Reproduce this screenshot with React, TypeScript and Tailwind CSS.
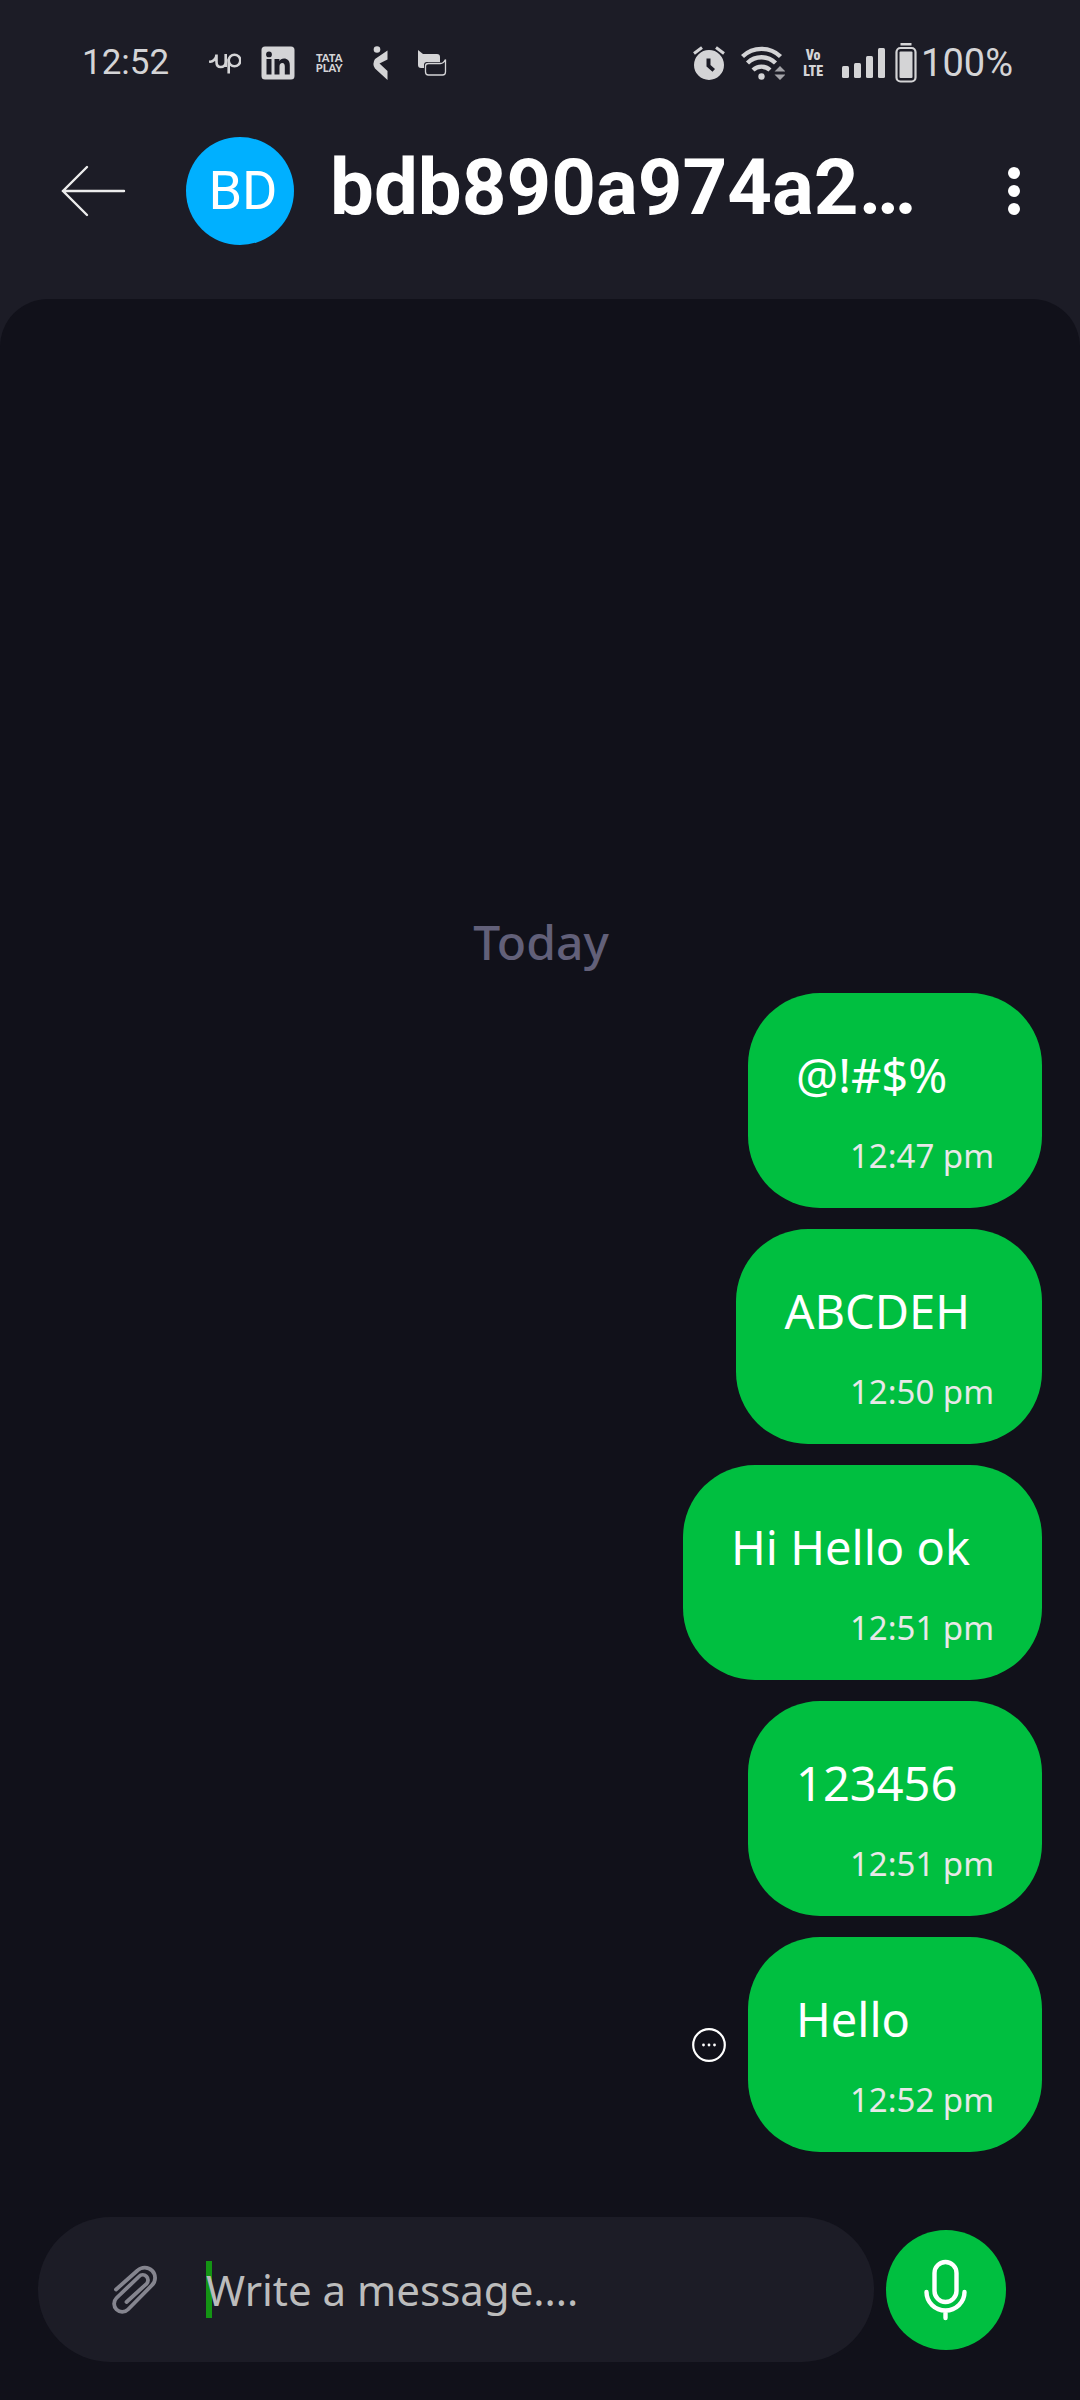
const messages = [
  { text: "@!#$%", time: "12:47 pm" },
  { text: "ABCDEH", time: "12:50 pm" },
  { text: "Hi Hello ok", time: "12:51 pm" },
  { text: "123456", time: "12:51 pm" },
  { text: "Hello", time: "12:52 pm", pending: true },
];

function NotificationIcons() {
  return (
    <div className="flex items-center gap-5 text-[#d4d4d6]">
      <svg className="h-8 w-8" viewBox="0 0 32 32" fill="none" stroke="currentColor" strokeWidth="2.6" aria-hidden="true">
        <path d="M0 14.5c3.500 1 7.500-2.500 7.500-7v7.500c0 3 1.600 5 4.200 5s5-1.700 5-5V7v13" />
        <circle cx="25.500" cy="13.500" r="5.800" />
        <path d="M19.700 12v14.500" />
      </svg>
      <svg className="h-[34px] w-[34px]" viewBox="0 0 34 34" aria-hidden="true">
        <path
          fill="currentColor"
          fillRule="evenodd"
          d="M4 .5h26Q33.500 .5 33.500 4v26q0 3.500-3.500 3.500H4Q.5 33.500 .5 30V4Q.5 .5 4 .5ZM5.500 13v15.500h5V13ZM8 5.500a2.900 2.900 0 1 0 0 5.800a2.900 2.900 0 0 0 0-5.800ZM13.500 13v15.500h5v-8c0-2 1-3.500 2.800-3.500s2.500 1.300 2.500 3.500v8h5v-9.200c0-4.500-2.400-6.700-5.800-6.700c-2.300 0-3.800 1.200-4.600 2.600V13Z"
        />
      </svg>
      <span className="w-7 text-center font-['Lato'] text-[11px] leading-[10px] font-black">
        <span className="block">TATA</span>
        <span className="block">PLAY</span>
      </span>
    </div>
  );
}

function OtherNotificationIcons() {
  return (
    <div className="flex items-center gap-[29px] text-[#d4d4d6]">
      <svg className="h-[34px] w-[15px]" viewBox="0 0 15 34" fill="currentColor" aria-hidden="true">
        <circle cx="4" cy="3.500" r="3.300" />
        <path d="M14.500 4.500v9L6.500 17.500l8 7.500v9L2 22.500Q-1.200 18 2 13Z" />
      </svg>
      <svg className="h-[26px] w-[30px]" viewBox="0 0 30 26" aria-hidden="true">
        <path fill="currentColor" d="M1 0l5 4h14q3 0 3 3v5H10q-3 0-3 3v3H4q-3 0-3-3Z" />
        <path fill="none" stroke="currentColor" strokeWidth="1.300" d="M28.500 9.500V22q0 3-3 3h-14q-3 0-3-3v-6q0-2.500 3-2.500h12q3 0 5-4Z" />
      </svg>
    </div>
  );
}

function SystemIcons() {
  return (
    <div className="flex items-center text-[#d4d4d6]">
      <svg className="h-[34px] w-8" viewBox="0 0 32 34" aria-hidden="true">
        <path
          fill="currentColor"
          fillRule="evenodd"
          d="M16 4a15 15 0 1 0 0 30a15 15 0 0 0 0-30ZM13.500 12.500h4v6.500l4.500 4l-2.500 2.800l-6-5.300Z"
        />
        <path stroke="currentColor" strokeWidth="3" d="M1 7.500l8-6M31 7.500l-8-6" />
      </svg>
      <svg className="ml-4 h-[34px] w-11" viewBox="0 0 44 34" aria-hidden="true">
        <g fill="none" stroke="currentColor" strokeWidth="4.400">
          <path d="M1.500 10.500a27.500 27.500 0 0 1 38 0" />
          <path d="M6.500 17a20 20 0 0 1 28 0" />
          <path d="M12 24a12.500 12.500 0 0 1 17 0" />
        </g>
        <circle cx="20.500" cy="30.500" r="3.200" fill="currentColor" />
        <path fill="#a3a3a8" d="M33.500 25.500l5.500-5.500l5.500 5.500ZM33.500 28.500h11l-5.500 5.500Z" />
      </svg>
      <span className="ml-4 flex w-6 flex-col items-center font-['Roboto_Condensed','Roboto'] text-[14px] leading-4 font-black">
        <span>Vo</span>
        <span>LTE</span>
      </span>
      <svg className="ml-4 h-[31px] w-[44px]" viewBox="0 0 44 31" fill="currentColor" aria-hidden="true">
        <rect x="1" y="19" width="7" height="12" rx="1.500" />
        <rect x="13" y="16" width="7" height="15" rx="1.500" />
        <rect x="25" y="9" width="7" height="22" rx="1.500" />
        <rect x="37" y="1" width="7" height="30" rx="1.500" />
      </svg>
      <svg className="ml-[10px] h-10 w-[22px]" viewBox="0 0 22 40" aria-hidden="true">
        <rect x="5.500" y="0" width="11" height="2.500" fill="currentColor" />
        <rect x="1.500" y="5" width="19" height="33.500" rx="4" fill="none" stroke="currentColor" strokeWidth="2.200" />
        <rect x="4.500" y="8.500" width="13" height="26.500" rx="1" fill="currentColor" />
      </svg>
      <span className="ml-1 text-[38px] leading-10">100%</span>
    </div>
  );
}

function PendingIcon() {
  return (
    <svg className="mr-[22px] h-[34px] w-[34px]" viewBox="0 0 34 34" role="img" aria-label="Sending">
      <circle cx="17" cy="17" r="15.800" fill="none" stroke="#fff" strokeWidth="2.200" />
      <circle cx="11.500" cy="17" r="1.400" fill="#fff" />
      <circle cx="17" cy="17" r="1.400" fill="#fff" />
      <circle cx="22.500" cy="17" r="1.400" fill="#fff" />
    </svg>
  );
}

export default function App() {
  return (
    <div className="flex min-h-screen flex-col bg-[#1c1c26] text-white">
      <div className="flex h-[109px] items-center justify-between pt-4 pr-[67px] pl-[82px] font-['Roboto',sans-serif]">
        <div className="flex items-center text-[#d4d4d6]">
          <span className="mr-10 text-[35px] leading-10">12:52</span>
          <NotificationIcons />
          <div className="ml-[30px]">
            <OtherNotificationIcons />
          </div>
        </div>
        <SystemIcons />
      </div>

      <header className="flex h-[190px] items-start pt-7 pr-[60px] pl-[61px] font-['Roboto',sans-serif]">
        <button type="button" aria-label="Back" className="mt-7">
          <svg className="h-[52px] w-[66px]" viewBox="0 0 66 52" fill="none" stroke="#ececec" strokeWidth="2.400" strokeLinecap="round">
            <path d="M2 26h61M26 2L2 26l24 24" />
          </svg>
        </button>
        <div className="ml-[59px] flex h-[108px] w-[108px] items-center justify-center rounded-full bg-[#00b0ff] pl-[6px] text-[54px] leading-none">
          BD
        </div>
        <h1 className="ml-9 flex-1 text-[78px] leading-[102px] font-bold">bdb890a974a2…</h1>
        <button type="button" aria-label="More options" className="mt-[29px]">
          <svg className="h-[50px] w-3" viewBox="0 0 12 50" fill="#fff">
            <circle cx="6" cy="7" r="6" />
            <circle cx="6" cy="25" r="6" />
            <circle cx="6" cy="43" r="6" />
          </svg>
        </button>
      </header>

      <main className="flex flex-1 flex-col rounded-t-[48px] bg-[#11111a] font-['Noto_Sans',sans-serif]">
        <section className="flex flex-1 flex-col justify-end pr-[38px] pb-[65px]">
          <h2 className="mb-[18px] pl-10 text-center text-[48px] leading-[66px] font-medium text-[#626079]">Today</h2>
          <ol className="flex flex-col gap-[21px]">
            {messages.map((m) => (
              <li key={m.text} className="flex items-center justify-end">
                {m.pending && <PendingIcon />}
                <div className="flex h-[215px] min-w-[294px] flex-col rounded-[72px] bg-[#00bf40] pt-[49px]">
                  <p className="pr-[72px] pl-12 text-[47px] leading-[66px]">{m.text}</p>
                  <time className="mt-[25px] pr-12 text-right text-[33px] leading-[46px] text-[#e8e8e8]">{m.time}</time>
                </div>
              </li>
            ))}
          </ol>
        </section>

        <form className="flex items-center pr-[74px] pb-[38px] pl-[38px]">
          <div className="flex h-[145px] flex-1 items-center rounded-full bg-[#1c1c26] pl-[74px]">
            <button type="button" aria-label="Attach file">
              <svg className="h-[50px] w-[46px]" viewBox="0 0 46 50" fill="none" stroke="#85858f" strokeWidth="3.800" strokeLinecap="round">
                <path d="M4 24.500L25.500 5.500a10.300 10.300 0 0 1 14.500 14.700L16 44.500A8 8 0 0 1 4.500 33L27 11.500a5.200 5.200 0 0 1 7.500 7.300L14.500 37" />
              </svg>
            </button>
            <span className="ml-12 h-[57px] w-[6px] bg-[#149414]" />
            <input
              aria-label="Message"
              placeholder="Write a message...."
              className="-ml-[6px] min-w-0 flex-1 bg-transparent text-[42px] leading-[58px] outline-none placeholder:text-[#bcbcbc] placeholder:opacity-100"
            />
          </div>
          <button type="button" aria-label="Record voice message" className="ml-3 flex h-[120px] w-[120px] items-center justify-center rounded-full bg-[#00bf40]">
            <svg className="h-[62px] w-[46px]" viewBox="0 0 46 62" fill="none" stroke="#fff" strokeWidth="4.400" strokeLinecap="round">
              <rect x="11.500" y="3" width="22" height="40" rx="11" />
              <path d="M3.500 33a19 18.500 0 0 0 38 0M22.500 52v7" />
            </svg>
          </button>
        </form>
      </main>
    </div>
  );
}
